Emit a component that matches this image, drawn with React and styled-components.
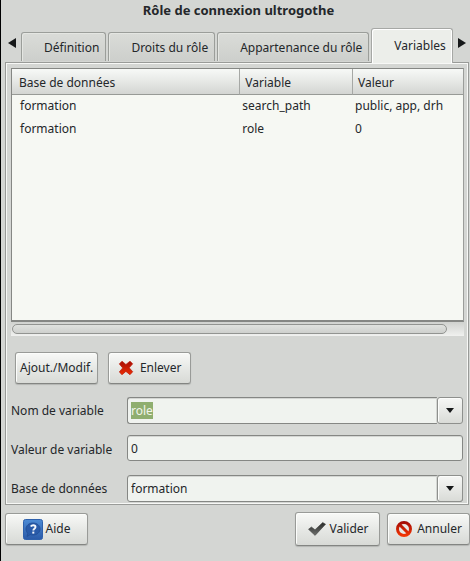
import React, { useEffect, useRef, useState } from "react";
import styled, { createGlobalStyle, css } from "styled-components";

const GlobalStyle = createGlobalStyle`
  *, *::before, *::after { box-sizing: border-box; }
  body {
    margin: 0;
    background: #d4d6d3;
    color: #24272a;
    font: 12px/18px "Noto Sans", "Open Sans", sans-serif;
  }
  button, input, select { font: inherit; color: inherit; margin: 0; }
`;

const Dialog = styled.main`
  min-height: 100vh;
  border-left: 1px solid #000;
  display: flex;
  flex-direction: column;
`;

const Title = styled.h1`
  margin: 0;
  padding: 1px 0 9px 6px;
  font-size: 13px;
  line-height: 18px;
  font-weight: 700;
  text-align: center;
`;

const TabStrip = styled.div`
  display: flex;
  align-items: flex-end;
  position: relative;
  margin: 0 1px -1px 4px;
  z-index: 1;
`;

const ScrollArrow = styled.button`
  flex: none;
  width: ${(p) => (p.$end ? 14 : 16)}px;
  height: 34px;
  padding: ${(p) => (p.$end ? "0 0 6px" : "0 3px 6px 0")};
  display: flex;
  align-items: center;
  justify-content: center;
  border: 0;
  background: none;
`;

const TabList = styled.div`
  flex: 1;
  min-width: 0;
  display: flex;
  align-items: flex-end;
  gap: 2px;
`;

const Tab = styled.button`
  flex: 0 0 auto;
  height: 29px;
  margin-bottom: 2px;
  padding: 2px 6px 0 22px;
  border: 1px solid #9b9e9a;
  border-bottom: 0;
  border-radius: 3px 3px 0 0;
  background: linear-gradient(#dadcd8, #cdcfcc);
  box-shadow: inset 1px 1px 0 #e4e6e2;
  white-space: nowrap;
  ${(p) =>
    p.$active &&
    css`
      height: 35px;
      margin-bottom: 0;
      padding: 0 6px 1px 22px;
      border-color: #a6a8a5;
      background: #eceeea;
      box-shadow: inset 1px 1px 0 #fff, inset -1px 0 0 #fff;
    `}
`;

const Panel = styled.section`
  margin: 0 1px 0 4px;
  padding: 5px 4px 2px 5px;
  border: 1px solid #999b98;
  box-shadow: inset 1px 1px 0 #f7f8f6, inset -1px -1px 0 #f7f8f6;
`;

const ListFrame = styled.div`
  height: 254px;
  overflow: hidden;
  border: 1px solid #858784;
  border-right-color: #9b9d9a;
  border-bottom-width: 2px;
  background: #f6f8f3;
`;

const Table = styled.table`
  width: 100%;
  table-layout: fixed;
  border-collapse: separate;
  border-spacing: 0;
`;

const HeadCell = styled.th`
  width: ${(p) => p.$w};
  height: 26px;
  padding: 2px 7px 0;
  text-align: left;
  font-weight: 400;
  background: linear-gradient(#f7f9f7, #e6e8e5 50%, #d3d5d2);
  border-bottom: 1px solid #979a96;
  & + & {
    padding-left: 5px;
    border-left: 1px solid #a6a8a5;
  }
`;

const Cell = styled.td`
  height: 23px;
  padding: 0 8px 2px;
  & + & { padding-left: 3px; }
`;

const ScrollTrack = styled.div`
  height: 14px;
  padding: 2px 17px 2px 1px;
  background: linear-gradient(#d0d2cf, #f0f1ef);
`;

const ScrollThumb = styled.div`
  height: 10px;
  border: 1px solid #929491;
  border-radius: 5px;
  background: linear-gradient(#e0e2df, #ced0cd);
`;

const ActionRow = styled.div`
  display: flex;
  gap: 10px;
  padding: 16px 4px 13px;
`;

const Button = styled.button`
  min-width: 83px;
  height: 32px;
  padding: 0 4px;
  display: flex;
  align-items: center;
  justify-content: center;
  gap: ${(p) => p.$gap || 6}px;
  border: 1px solid #999b98;
  border-bottom-color: #838582;
  border-radius: 3px;
  background: linear-gradient(#f8f9f7, #e5e7e4 55%, #d8dad6);
  box-shadow: inset 1px 1px 0 #fcfdfb, 0 1px 1px #b3b5b2;
  white-space: nowrap;
  ${(p) =>
    p.$primary &&
    css`
      min-width: 85px;
      height: 34px;
    `}
  svg { flex: none; }
`;

const Form = styled.form`
  display: grid;
  grid-template-columns: 116px minmax(0, 1fr);
  row-gap: 11px;
  padding-right: 1px;
  align-items: center;
`;

const Combo = styled.div`
  display: grid;
  grid-template-columns: minmax(0, 1fr) 26px;
  height: 27px;
`;

const field = css`
  width: 100%;
  height: 27px;
  padding: 0 3px;
  border: 1px solid #858784;
  border-radius: 3px;
  outline: 0;
  background: #f0f3ef;
  box-shadow: inset 0 1px 0 #d4d6d3;
`;

const Input = styled.input`
  ${field}
  ${(p) => (p.$joined ? "border-right: 0; border-radius: 3px 0 0 3px;" : "height: 26px; margin-bottom: 3px;")}
  &::selection { background: #8fae6f; color: #f2f5ec; }
`;

const Select = styled.select`
  ${field}
  grid-area: 1 / 1 / 2 / 3;
  appearance: none;
`;

const dropFace = css`
  grid-area: 1 / 2;
  padding: 0;
  display: flex;
  align-items: center;
  justify-content: center;
  border: 1px solid #8e908d;
  border-radius: 3px;
  background: linear-gradient(#f6f7f5, #d9dbd7);
  box-shadow: inset 1px 1px 0 #fcfdfb, -1px 0 0 #d4d6d3;
`;

const DropButton = styled.button`${dropFace}`;
const DropMark = styled.span`
  ${dropFace}
  z-index: 1;
  pointer-events: none;
`;

const Footer = styled.footer`
  display: flex;
  align-items: center;
  gap: 7px;
  padding: 7px 0 0 4px;
`;

const Spacer = styled.span`flex: 1;`;

const SideArrow = ({ right }) => (
  <svg width="10" height="12" viewBox="0 0 10 12" aria-hidden="true">
    <path d={right ? "M1 1 9 6 1 11Z" : "M9 1 1 6 9 11Z"} fill="#161819" />
  </svg>
);

const DownArrow = () => (
  <svg width="10" height="6" viewBox="0 0 10 6" aria-hidden="true">
    <path d="M1 0h8L5 5Z" fill="#161819" />
  </svg>
);

const CrossIcon = () => (
  <svg width="16" height="16" viewBox="0 0 16 16" aria-hidden="true">
    <defs>
      <linearGradient id="cross" x2="0" y2="1">
        <stop stopColor="#a50e07" />
        <stop offset="1" stopColor="#ee2d04" />
      </linearGradient>
    </defs>
    <path
      d="M4 1.2 7.9 4.5 12 1.2 14.7 3.8 11.2 7.8 14.7 11.7 12 14.7 7.9 11.4 4 14.7 1.3 12 4.7 7.9 1.3 3.9Z"
      fill="url(#cross)" stroke="#b91b08" strokeWidth=".7" strokeLinejoin="round"
    />
  </svg>
);

const CheckIcon = () => (
  <svg width="20" height="16" viewBox="0 0 20 16" aria-hidden="true">
    <defs>
      <linearGradient id="check" x2="0" y2="1">
        <stop stopColor="#292b29" />
        <stop offset="1" stopColor="#6e706d" />
      </linearGradient>
    </defs>
    <path
      d="M1.5 8.3 4.4 6 8 8.8 15.7 1.5 18.6 3.2 8.1 14.4Z"
      fill="url(#check)" stroke="#464846" strokeWidth=".6" strokeLinejoin="round"
    />
  </svg>
);

const ForbidIcon = () => (
  <svg width="18" height="18" viewBox="0 0 18 18" aria-hidden="true">
    <defs>
      <linearGradient id="forbid" gradientUnits="userSpaceOnUse" x1="0" y1="1" x2="0" y2="17">
        <stop stopColor="#9d0704" />
        <stop offset="1" stopColor="#fa3a04" />
      </linearGradient>
    </defs>
    <circle cx="9" cy="9" r="6.5" fill="#e8e8e5" stroke="url(#forbid)" strokeWidth="3" />
    <path d="M4.5 4.5 13.5 13.5" stroke="url(#forbid)" strokeWidth="3" />
  </svg>
);

const HelpIcon = () => (
  <svg width="20" height="21" viewBox="0 0 20 21" aria-hidden="true">
    <defs>
      <linearGradient id="help" x2="0" y2="1">
        <stop stopColor="#4c8bd5" />
        <stop offset="1" stopColor="#2a5aa8" />
      </linearGradient>
    </defs>
    <rect x=".5" y=".5" width="19" height="20" rx="2" fill="url(#help)" stroke="#2e61ac" />
    <path
      d="M10 4c4 0 7 2.5 7 6s-3 6-7 6c-1 0-2-.1-2.8-.4L4 17.5l.8-3.3C3.6 13.1 3 11.7 3 10c0-3.5 3-6 7-6Z"
      fill="#285aa9" stroke="#214d94" strokeWidth=".8"
    />
    <path
      d="M7.7 7.5C8.4 6.6 9.2 6.2 10.2 6.2c1.5 0 2.3.7 2.3 1.8 0 1.8-2.2 1.7-2.2 3.5"
      fill="none" stroke="#f5f8fc" strokeWidth="1.9"
    />
    <path d="M9.3 12.6h2v2h-2z" fill="#f5f8fc" />
  </svg>
);

const TABS = ["Définition", "Droits du rôle", "Appartenance du rôle", "Variables"];
const ROWS = [
  ["formation", "search_path", "public, app, drh"],
  ["formation", "role", "0"],
];

export default function App() {
  const nameRef = useRef(null);
  const [tab, setTab] = useState(3);
  useEffect(() => {
    nameRef.current.focus();
    nameRef.current.select();
  }, []);

  return (
    <>
      <GlobalStyle />
      <Dialog>
        <Title>Rôle de connexion ultrogothe</Title>
        <TabStrip>
          <ScrollArrow type="button" aria-label="Onglet précédent">
            <SideArrow />
          </ScrollArrow>
          <TabList role="tablist">
            {TABS.map((label, i) => (
              <Tab
                key={label}
                type="button"
                role="tab"
                aria-selected={i === tab}
                $active={i === tab}
                onClick={() => setTab(i)}
              >
                {label}
              </Tab>
            ))}
          </TabList>
          <ScrollArrow type="button" $end aria-label="Onglet suivant">
            <SideArrow right />
          </ScrollArrow>
        </TabStrip>
        <Panel>
          <ListFrame>
            <Table>
              <thead>
                <tr>
                  <HeadCell $w="50.4%">Base de données</HeadCell>
                  <HeadCell $w="25%">Variable</HeadCell>
                  <HeadCell>Valeur</HeadCell>
                </tr>
              </thead>
              <tbody>
                {ROWS.map((row) => (
                  <tr key={row[1]}>
                    {row.map((value, i) => <Cell key={i}>{value}</Cell>)}
                  </tr>
                ))}
              </tbody>
            </Table>
          </ListFrame>
          <ScrollTrack>
            <ScrollThumb />
          </ScrollTrack>
          <ActionRow>
            <Button type="button">Ajout./Modif.</Button>
            <Button type="button">
              <CrossIcon />
              Enlever
            </Button>
          </ActionRow>
          <Form onSubmit={(e) => e.preventDefault()}>
            <label htmlFor="name">Nom de variable</label>
            <Combo>
              <Input id="name" ref={nameRef} $joined defaultValue="role" autoComplete="off" />
              <DropButton type="button" aria-label="Choisir une variable">
                <DownArrow />
              </DropButton>
            </Combo>
            <label htmlFor="value">Valeur de variable</label>
            <Input id="value" defaultValue="0" autoComplete="off" />
            <label htmlFor="database">Base de données</label>
            <Combo>
              <Select id="database" defaultValue="formation">
                <option>formation</option>
              </Select>
              <DropMark aria-hidden="true">
                <DownArrow />
              </DropMark>
            </Combo>
          </Form>
        </Panel>
        <Footer>
          <Button type="button" $gap={3}>
            <HelpIcon />
            Aide
          </Button>
          <Spacer />
          <Button type="button" $primary $gap={3}>
            <CheckIcon />
            Valider
          </Button>
          <Button type="button" $gap={4}>
            <ForbidIcon />
            Annuler
          </Button>
        </Footer>
      </Dialog>
    </>
  );
}
